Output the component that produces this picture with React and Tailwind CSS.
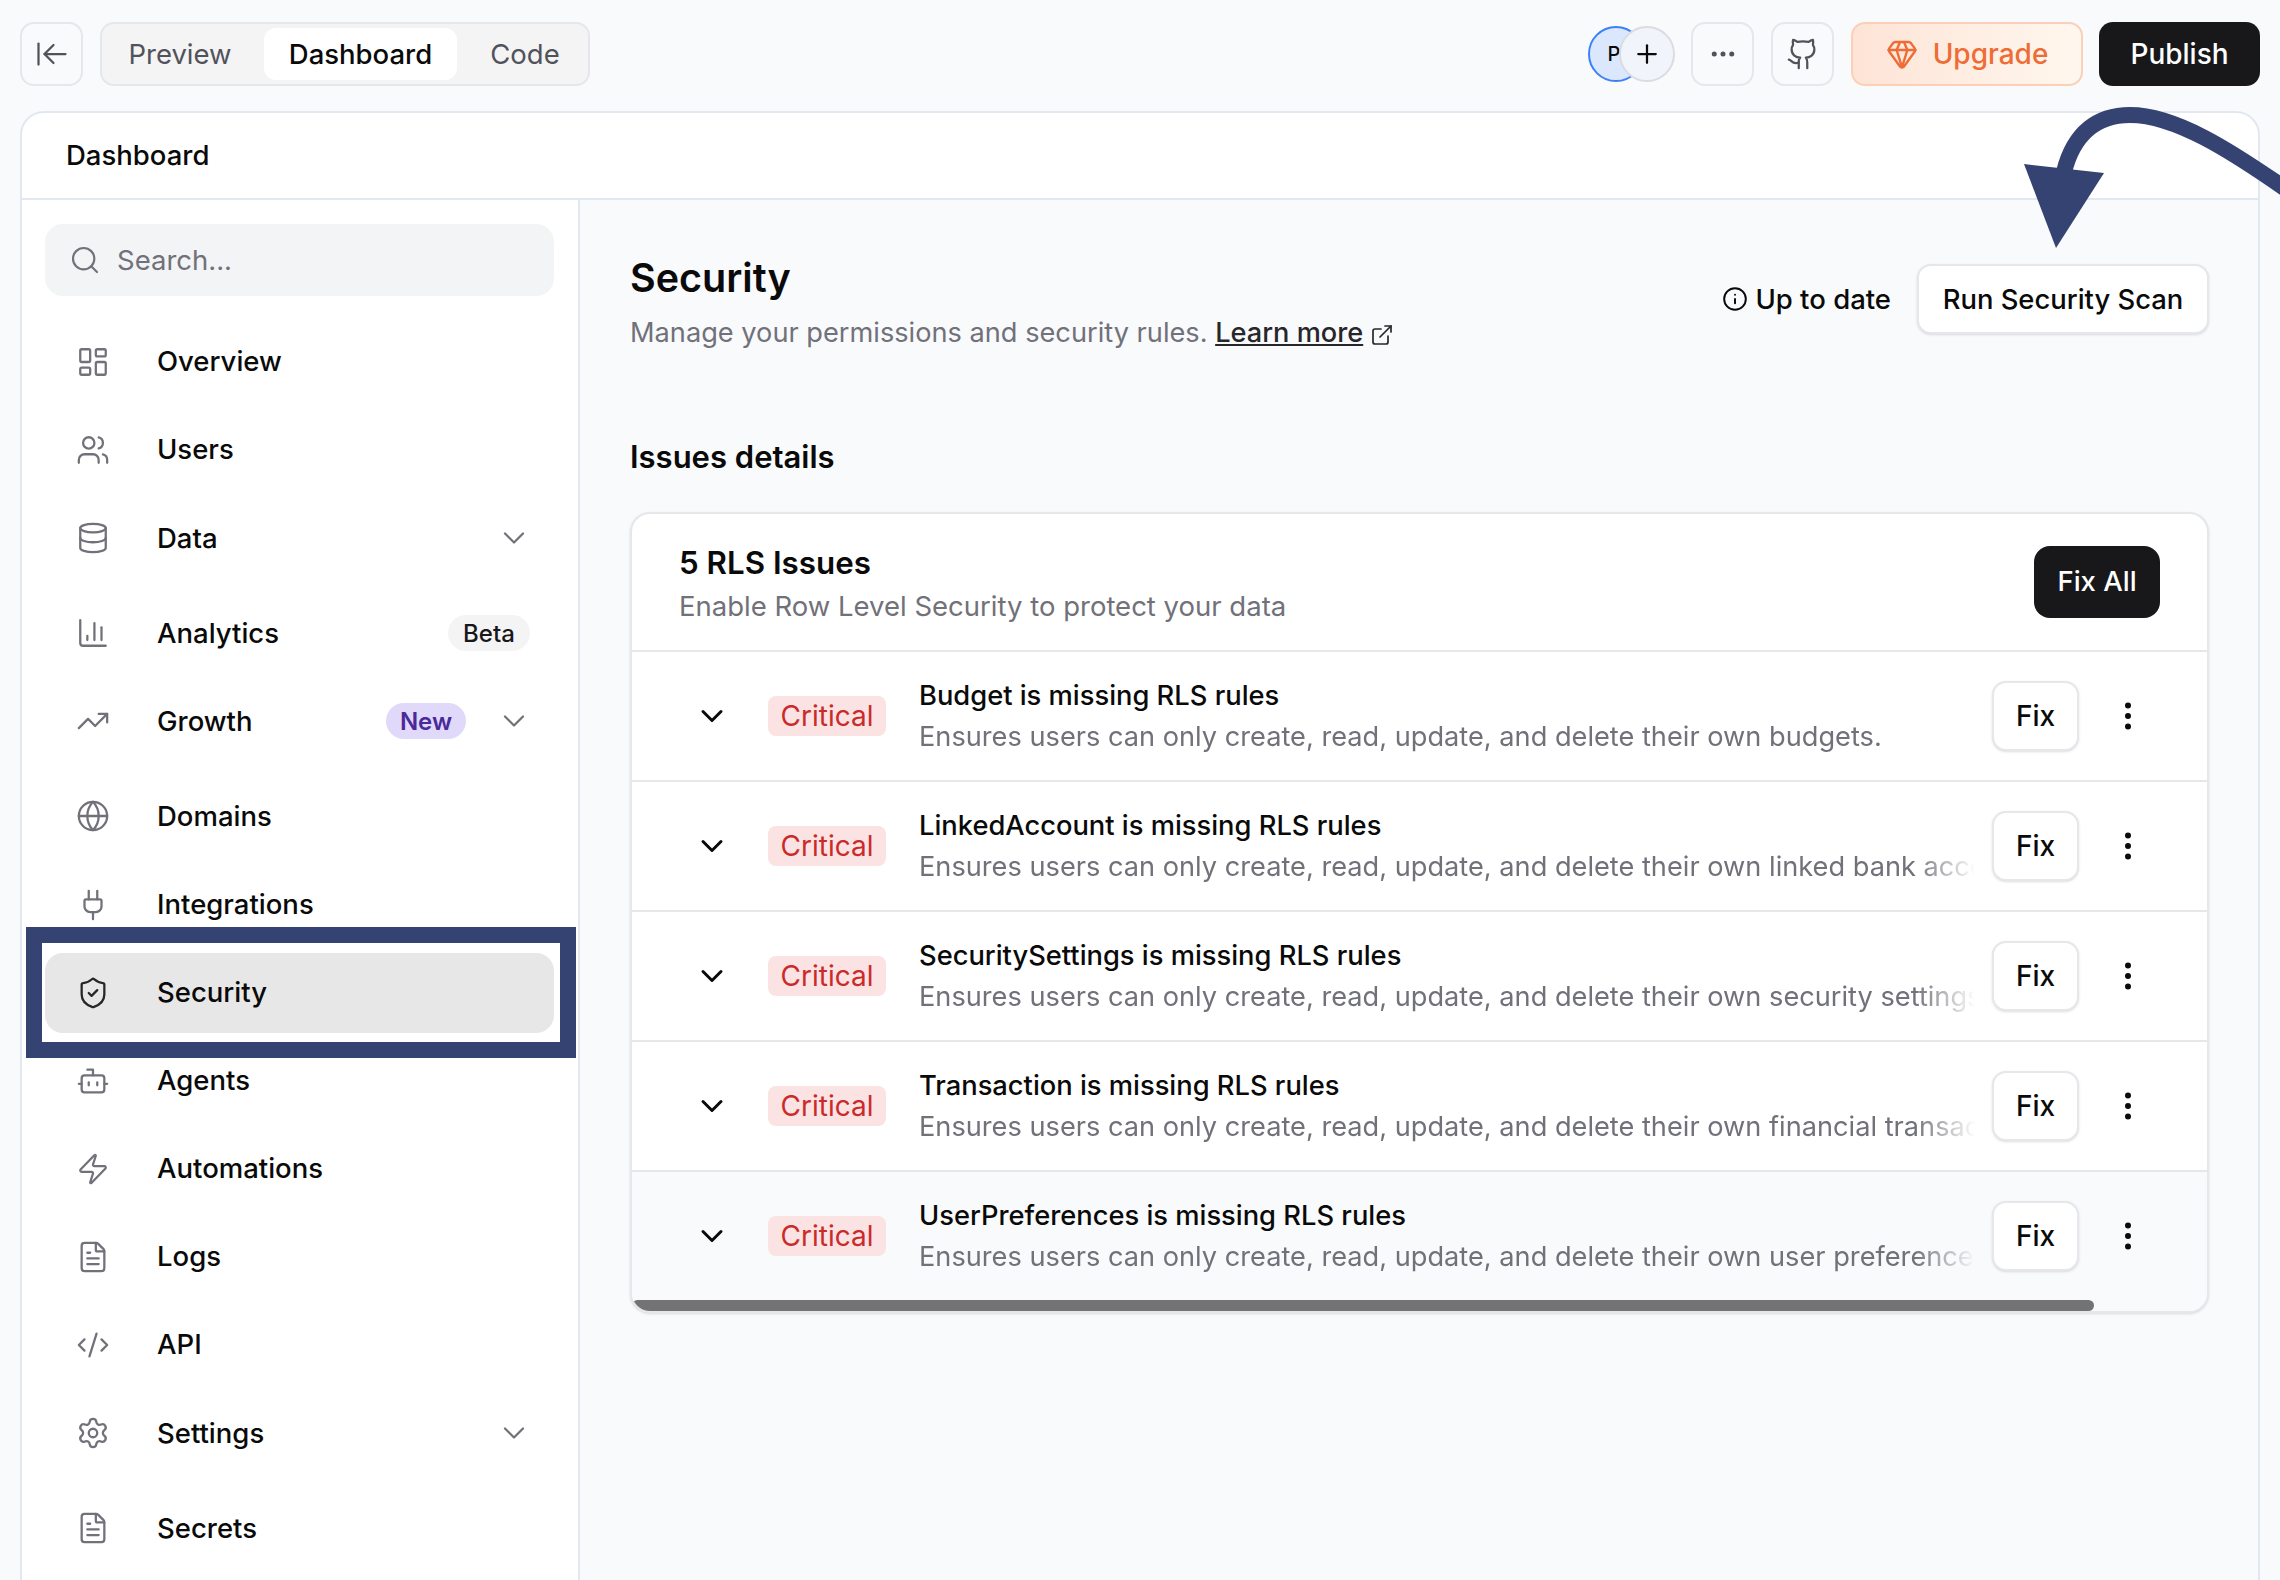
import React from "react";
import {
  ArrowLeftToLine,
  Bot,
  ChevronDown,
  CodeXml,
  Ellipsis,
  EllipsisVertical,
  ExternalLink,
  FileText,
  Gem,
  Github,
  Globe,
  Info,
  LayoutDashboard,
  Database,
  Plug,
  Plus,
  Search,
  Settings,
  ShieldCheck,
  TrendingUp,
  Users,
  Zap,
} from "lucide-react";

function ChartIcon({ size, strokeWidth, className }) {
  return (
    <svg width={size} height={size} viewBox="0 0 24 24" fill="none" stroke="currentColor" strokeWidth={strokeWidth} strokeLinecap="round" strokeLinejoin="round" className={className}>
      <path d="M3 3v16a2 2 0 0 0 2 2h16" />
      <path d="M8 17v-3" />
      <path d="M13 17V5" />
      <path d="M18 17V8" />
    </svg>
  );
}

const navItems = [
  { label: "Overview", icon: LayoutDashboard },
  { label: "Users", icon: Users },
  { label: "Data", icon: Database, chevron: true },
  { label: "Analytics", icon: ChartIcon, badge: "Beta" },
  { label: "Growth", icon: TrendingUp, badge: "New", chevron: true },
  { label: "Domains", icon: Globe },
  { label: "Integrations", icon: Plug },
  { label: "Security", icon: ShieldCheck, active: true },
  { label: "Agents", icon: Bot },
  { label: "Automations", icon: Zap },
  { label: "Logs", icon: FileText },
  { label: "API", icon: CodeXml },
  { label: "Settings", icon: Settings, chevron: true },
  { label: "Secrets", icon: FileText },
];

const issues = [
  { name: "Budget", what: "budgets." },
  { name: "LinkedAccount", what: "linked bank accounts." },
  { name: "SecuritySettings", what: "security settings." },
  { name: "Transaction", what: "financial transactions." },
  { name: "UserPreferences", what: "user preferences.", muted: true },
];

function NavRow({ item }) {
  const Icon = item.icon;
  return (
    <div
      className={`flex h-[80px] shrink-0 items-center rounded-[18px] pl-[31px] pr-[22px] ${
        item.active ? "bg-[#e7e7e7]" : ""
      } ${item.chevron ? "mb-[7px]" : ""}`}
    >
      <Icon
        size={34}
        strokeWidth={1.6}
        className={`shrink-0 ${item.active ? "text-[#27272a]" : "text-[#71717a]"}`}
      />
      <span className="ml-[47px] flex-1 text-[27.5px] font-medium text-[#0a0a0a]">{item.label}</span>
      {item.badge === "Beta" && (
        <span className="mr-[2px] flex h-[36px] w-[82px] items-center justify-center rounded-full bg-[#f4f4f5] pt-[2px] text-[24px] font-medium text-[#18181b]">
          Beta
        </span>
      )}
      {item.badge === "New" && (
        <span className="mr-[30px] flex h-[36px] w-[80px] items-center justify-center rounded-full bg-[#e0d9fa] pt-[2px] text-[24px] font-semibold text-[#4a2a9a]">
          New
        </span>
      )}
      {item.chevron && <ChevronDown size={36} strokeWidth={1.5} className="shrink-0 text-[#71717a]" />}
    </div>
  );
}

function IssueRow({ issue }) {
  return (
    <div className={`flex h-[130px] items-center border-t-2 border-[#e5e7eb] pl-[62px] pr-[61px] ${issue.muted ? "bg-[#f9fafc]" : "bg-white"}`}>
      <ChevronDown size={36} strokeWidth={2} className="shrink-0 text-[#0a0a0a]" />
      <span className="ml-[38px] flex h-[40px] w-[118px] shrink-0 items-center justify-center rounded-[8px] bg-[#fbe3e3] text-[28px] text-[#cb2a2a]">
        Critical
      </span>
      <div className="ml-[33px] min-w-0 flex-1">
        <div className="whitespace-nowrap pt-[1px] text-[27.3px] leading-[40px] font-medium text-[#0a0a0a]">
          {issue.name} is missing RLS rules
        </div>
        <div className="overflow-hidden whitespace-nowrap pt-[1px] text-[27.2px] leading-[40px] text-[#71717a] [mask-image:linear-gradient(to_right,black_calc(100%-60px),transparent)]">
          Ensures users can only create, read, update, and delete their own {issue.what}
        </div>
      </div>
      <button className="ml-[17px] flex h-[70px] w-[87px] shrink-0 items-center justify-center rounded-[14px] border-2 border-[#e5e7eb] bg-white text-[28px] font-medium text-[#0a0a0a] shadow-sm">
        Fix
      </button>
      <EllipsisVertical size={36} strokeWidth={2} className="ml-[31px] shrink-0 text-[#0a0a0a]" />
    </div>
  );
}

export default function App() {
  return (
    <div className="relative h-[1580px] overflow-hidden bg-[#f9fafc] font-['Inter',sans-serif]">
      {/* top bar */}
      <div className="flex h-[111px] items-start px-[20px] pt-[22px]">
        <button className="flex h-[64px] w-[63px] items-center justify-center rounded-[14px] border-2 border-[#e5e7eb] text-[#52525b]">
          <ArrowLeftToLine size={36} strokeWidth={1.5} />
        </button>
        <div className="ml-[17px] flex h-[64px] w-[490px] items-center rounded-[14px] border-2 border-[#e5e7eb] bg-[#f4f4f5] text-[27.5px] text-[#52525b]">
          <span className="mr-[6px] w-[156px] pt-[2px] text-center">Preview</span>
          <span className="flex h-[52px] w-[193px] items-center justify-center rounded-[12px] bg-white pt-[2px] font-medium text-[#0a0a0a]">
            Dashboard
          </span>
          <span className="w-[131px] pl-[5px] pt-[2px] text-center">Code</span>
        </div>
        <div className="ml-auto flex h-[64px] items-center">
          <div className="flex">
            <span className="flex h-[56px] w-[56px] items-center justify-center rounded-full border-2 border-[#3b82f6] bg-[#dbe7fd] pr-[4px] text-[20px] font-medium text-[#0a0a0a]">
              P
            </span>
            <span className="-ml-[25px] flex h-[56px] w-[56px] items-center justify-center rounded-full border-2 border-[#d9dce1] bg-[#f1f5fb] text-[#0a0a0a]">
              <Plus size={30} strokeWidth={1.8} />
            </span>
          </div>
          <button className="ml-[16px] flex h-[64px] w-[63px] items-center justify-center rounded-[14px] border-2 border-[#e5e7eb] text-[#52525b]">
            <Ellipsis size={30} strokeWidth={2} />
          </button>
          <button className="ml-[17px] flex h-[64px] w-[63px] items-center justify-center rounded-[14px] border-2 border-[#e5e7eb] text-[#52525b]">
            <Github size={34} strokeWidth={1.6} />
          </button>
          <button className="ml-[17px] flex h-[64px] w-[232px] items-center justify-center gap-[15px] rounded-[14px] border-2 border-[#fbcfb8] bg-gradient-to-r from-[#fde4d6] to-[#fff7ee] text-[28px] font-medium text-[#ee6c35]">
            <Gem size={32} strokeWidth={1.8} />
            Upgrade
          </button>
          <button className="ml-[16px] flex h-[64px] w-[161px] items-center justify-center rounded-[14px] bg-[#18181b] text-[28px] font-medium text-white">
            Publish
          </button>
        </div>
      </div>

      {/* panel */}
      <div className="mx-[20px] h-[1520px] overflow-hidden rounded-t-[24px] border-2 border-[#e2e8f0] bg-white">
        <div className="flex h-[87px] items-center border-b-2 border-[#e2e8f0] pl-[44px] text-[27.5px] font-medium text-[#0a0a0a]">
          Dashboard
        </div>
        <div className="flex">
          {/* sidebar */}
          <div className="h-[1430px] w-[558px] shrink-0 border-r-2 border-[#e2e8f0] bg-white pl-[23px] pr-[24px] pt-[24px]">
            <div className="flex h-[72px] items-center rounded-[18px] bg-[#f3f4f6] pl-[24px] text-[27.5px] text-[#71717a]">
              <Search size={32} strokeWidth={1.6} />
              <span className="ml-[16px] pt-[2px]">Search...</span>
            </div>
            <div className="mt-[26px] flex flex-col gap-[8.1px]">
              {navItems.map((item) => (
                <NavRow key={item.label} item={item} />
              ))}
            </div>
          </div>

          {/* main */}
          <div className="min-w-0 flex-1 bg-[#f9fafc] pl-[50px] pr-[49px] pt-[52.5px]">
            <div className="flex items-start justify-between">
              <div>
                <h1 className="text-[39.5px] leading-[50px] font-semibold text-[#0a0a0a]">Security</h1>
                <p className="mt-[12.5px] text-[27.2px] leading-[36px] text-[#71717a]">
                  Manage your permissions and security rules.{" "}
                  <span className="font-medium text-[#27272a] underline">Learn more</span>
                  <ExternalLink size={24} strokeWidth={1.7} className="ml-[7px] inline-block text-[#27272a]" />
                </p>
              </div>
              <div className="mt-[11.5px] flex items-center">
                <Info size={26} strokeWidth={1.8} className="text-[#0a0a0a]" />
                <span className="ml-[7px] pt-[2px] text-[27.5px] font-medium text-[#0a0a0a]">Up to date</span>
                <button className="ml-[26px] flex h-[70px] w-[292px] items-center justify-center rounded-[14px] border-2 border-[#e5e7eb] bg-white pt-[1px] text-[27.4px] font-medium text-[#0a0a0a] shadow-sm">
                  Run Security Scan
                </button>
              </div>
            </div>

            <h2 className="mt-[87.5px] text-[31px] leading-[36px] font-semibold text-[#0a0a0a]">Issues details</h2>

            <div className="mt-[37.5px] overflow-hidden rounded-[20px] border-2 border-[#e5e7eb] bg-white shadow-sm">
              <div className="flex h-[136px] items-center justify-between px-[47px]">
                <div className="pt-[3px]">
                  <div className="text-[31.3px] leading-[42px] font-semibold text-[#0a0a0a]">5 RLS Issues</div>
                  <div className="mt-[3px] text-[27.5px] leading-[38px] text-[#71717a]">
                    Enable Row Level Security to protect your data
                  </div>
                </div>
                <button className="flex h-[72px] w-[126px] items-center justify-center rounded-[16px] bg-[#18181b] text-[27.5px] font-medium text-white">
                  Fix All
                </button>
              </div>
              {issues.map((issue) => (
                <IssueRow key={issue.name} issue={issue} />
              ))}
              <div className="h-[11px] bg-[#f9fafc]">
                <div className="h-full w-[1462px] rounded-full bg-[#737373]" />
              </div>
            </div>
          </div>
        </div>
      </div>

      {/* annotation overlays */}
      <div className="pointer-events-none absolute left-[26px] top-[927px] h-[131px] w-[550px] border-[16px] border-[#354373]" />
      <svg className="pointer-events-none absolute left-[2000px] top-[90px]" width="280" height="170" viewBox="2000 90 280 170" fill="none">
        <path d="M2064 172 C2074 132 2098 115 2130 115 C2175 115 2230 150 2290 192" stroke="#354373" strokeWidth="16" />
        <polygon points="2024,164 2104,173 2056,248" fill="#354373" />
      </svg>
    </div>
  );
}
